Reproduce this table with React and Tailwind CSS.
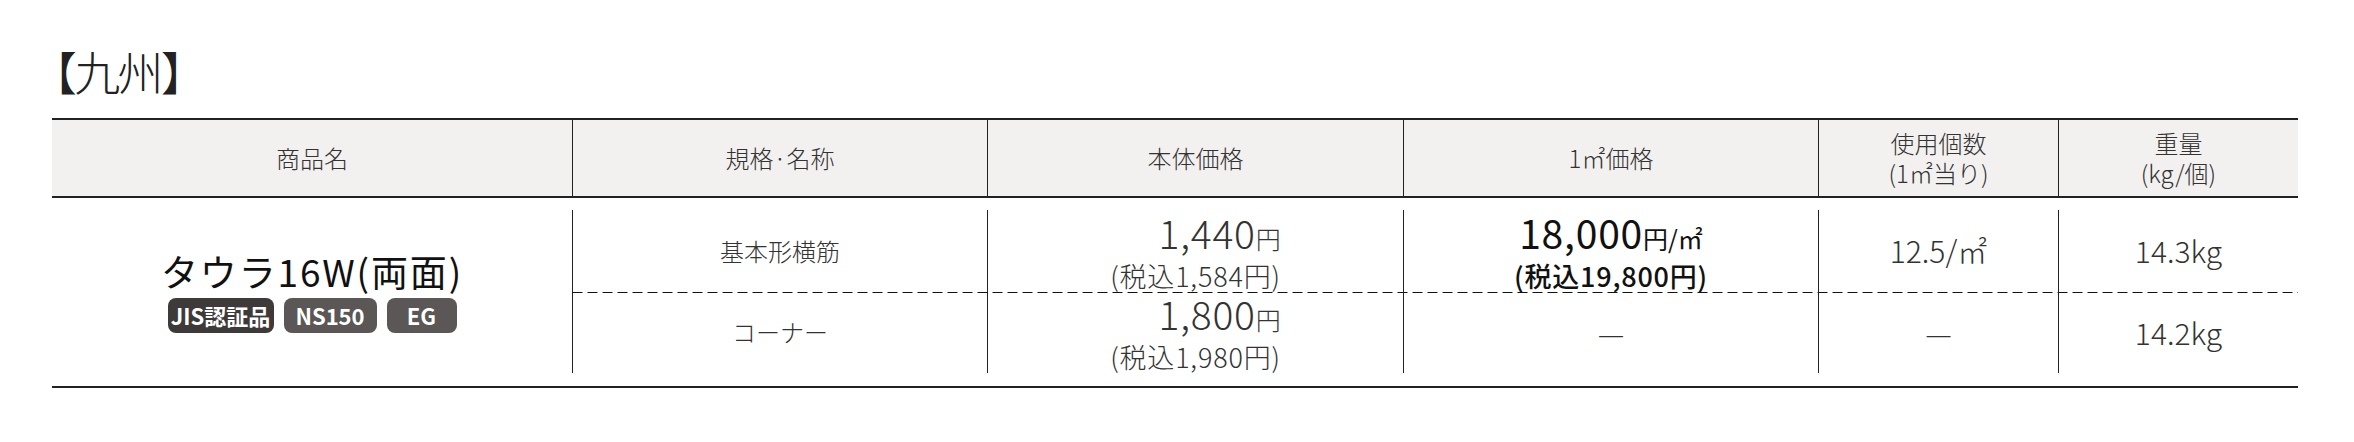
import React from 'react';

const heads = [
  { w: 'w-[520px]', lines: ['商品名'] },
  { w: 'w-[415px]', lines: ['規格·名称'] },
  { w: 'w-[416px]', lines: ['本体価格'] },
  { w: 'w-[415px]', lines: ['1㎡価格'] },
  { w: 'w-[240px]', lines: ['使用個数', '(1㎡当り)'] },
  { w: 'w-[240px]', lines: ['重量', '(kg/個)'] },
];

const rows = [
  { name: '基本形横筋', price: '1,440', tax: '1,584', sqm: true, count: '12.5/㎡', weight: '14.3kg' },
  { name: 'コーナー', price: '1,800', tax: '1,980', sqm: false, count: '—', weight: '14.2kg' },
];

function Badge({ children, dark, w }) {
  return (
    <span className={`${dark ? 'bg-[#3e3a39]' : 'bg-[#5a5756]'} ${w} h-[35px] rounded-[8px] text-white text-[22px] font-bold leading-[35px] text-center`}>
      {children}
    </span>
  );
}

function Row({ item, dashed }) {
  return (
    <div className={`flex h-[81.5px] ${dashed ? 'bg-[linear-gradient(to_right,#111_10px,transparent_10px)] bg-[length:15px_1px] bg-repeat-x bg-top' : ''}`}>
      <div className="w-[415px] border-l border-[#222] flex items-center justify-center text-[24px] font-light text-[#333]">
        {item.name}
      </div>
      <div className="w-[416px] border-l border-[#222] flex items-center justify-center">
        <div className="flex flex-col items-end font-light text-[#333] tracking-[0.05em]">
          <div className="text-[39px] leading-[44px]">{item.price}<span className="text-[25px] tracking-normal">円</span></div>
          <div className="text-[27px] leading-[32px]">(税込{item.tax}円)</div>
        </div>
      </div>
      <div className="w-[415px] border-l border-[#222] flex items-center justify-center text-[#111]">
        {item.sqm ? (
          <div className="flex flex-col items-center tracking-[0.05em]">
            <div className="text-[39px] leading-[44px]">18,000<span className="text-[25px] tracking-normal">円/㎡</span></div>
            <div className="text-[27px] leading-[32px] font-medium">(税込19,800円)</div>
          </div>
        ) : (
          <span className="text-[30px] font-light text-[#333]">—</span>
        )}
      </div>
      <div className="w-[240px] border-l border-[#222] flex items-center justify-center text-[30px] font-light text-[#333]">
        {item.count}
      </div>
      <div className="w-[240px] border-l border-[#222] flex items-center justify-center text-[30px] font-light text-[#333]">
        {item.weight}
      </div>
    </div>
  );
}

export default function App() {
  return (
    <div className="w-[2354px] h-[442px] bg-white pl-[52px] pr-[56px] font-['Noto_Sans_CJK_JP','Noto_Sans_CJK_SC',sans-serif] text-[#222]">
      <div className="h-[118px] pt-[42px] -ml-[21px] text-[46px] leading-[56px] font-light tracking-[-0.06em]">【九州】</div>

      <div className="flex h-[80px] border-y-2 border-[#222] bg-[#f2f1ef] text-[24px] leading-[30px] font-light text-[#333]">
        {heads.map((h, i) => (
          <div key={i} className={`${h.w} ${i > 0 ? 'border-l border-[#222]' : ''} flex flex-col items-center justify-center text-center`}>
            {h.lines.map((l) => (
              <div key={l}>{l}</div>
            ))}
          </div>
        ))}
      </div>

      <div className="flex border-b-2 border-[#222] pt-[12px] pb-[13px]">
        <div className="w-[520px] flex flex-col items-center justify-center gap-[6px]">
          <div className="text-[37px] leading-[42px] tracking-[0.05em] text-[#111]">タウラ16W(両面)</div>
          <div className="flex gap-[10px]">
            <Badge dark w="w-[106px]">JIS認証品</Badge>
            <Badge w="w-[93px]">NS150</Badge>
            <Badge w="w-[70px]">EG</Badge>
          </div>
        </div>
        <div className="flex flex-col">
          <Row item={rows[0]} />
          <Row item={rows[1]} dashed />
        </div>
      </div>
    </div>
  );
}
